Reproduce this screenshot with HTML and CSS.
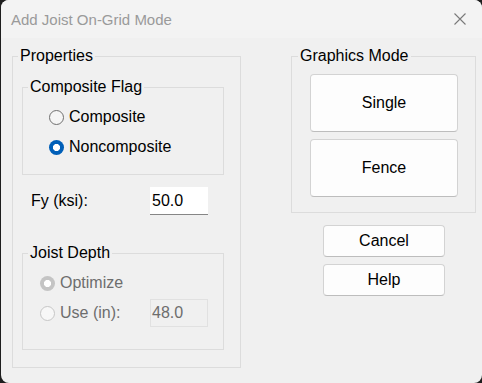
FILE: index.html
```html
<!DOCTYPE html>
<html lang="en">
<head>
<meta charset="utf-8">
<title>Add Joist On-Grid Mode</title>
<link rel="stylesheet" href="styles.css">
</head>
<body>
<div class="window">
  <div class="titlebar">
    <span class="title">Add Joist On-Grid Mode</span>
    <span class="close" aria-label="Close">
      <svg width="12" height="12" viewBox="0 0 12 12"><path d="M0.5 0.5 L11.5 11.5 M11.5 0.5 L0.5 11.5" stroke="#7a7a7a" stroke-width="1.1" fill="none"/></svg>
    </span>
  </div>
  <div class="content">
    <fieldset class="group props">
      <legend>Properties</legend>
      <fieldset class="group sub flag">
        <legend>Composite Flag</legend>
        <div class="radio"><span class="dot"></span>Composite</div>
        <div class="radio"><span class="dot on"></span>Noncomposite</div>
      </fieldset>
      <div class="field-row">
        <span class="field-label">Fy (ksi):</span>
        <span class="textbox">50.0</span>
      </div>
      <fieldset class="group sub depth">
        <legend>Joist Depth</legend>
        <div class="radio disabled"><span class="dot on"></span>Optimize</div>
        <div class="radio-row">
          <div class="radio disabled use"><span class="dot"></span>Use (in):</div>
          <span class="textbox disabled">48.0</span>
        </div>
      </fieldset>
    </fieldset>
    <div class="right">
      <fieldset class="group graphics">
        <legend>Graphics Mode</legend>
        <button class="btn big">Single</button>
        <button class="btn big">Fence</button>
      </fieldset>
      <div class="actions">
        <button class="btn small">Cancel</button>
        <button class="btn small">Help</button>
      </div>
    </div>
  </div>
</div>
</body>
</html>
```
FILE: styles.css
```css
html, body {
  margin: 0;
  padding: 0;
  background: #1e1e1e;
}
body {
  width: 482px;
  height: 383px;
  overflow: hidden;
  font-family: "Liberation Sans", Arial, sans-serif;
  font-size: 16px;
  color: #000;
}
.window {
  margin-left: 1px;
  width: 481px;
  height: 383px;
  background: #f0f0f0;
  border-radius: 8px;
  overflow: hidden;
}
.titlebar {
  height: 38px;
  background: #f3f3f3;
  display: flex;
  align-items: center;
  padding-left: 10px;
  box-sizing: border-box;
}
.title {
  font-size: 15px;
  line-height: 18px;
  color: #9a9a9a;
  margin-top: 1px;
}
.close {
  margin-left: auto;
  margin-right: 16px;
  width: 12px;
  height: 12px;
  display: flex;
}
.content {
  display: flex;
  align-items: flex-start;
  gap: 50px;
  padding: 9px 0 0 11px;
}
.group {
  margin: 0;
  padding: 0;
  border: 1px solid #dcdcdc;
  box-sizing: border-box;
  min-width: 0;
}
.group > legend {
  margin-left: 5px;
  padding: 0 2px;
  font-size: 16px;
  line-height: 18px;
}
.props {
  width: 229px;
  padding: 13px 0 17px 0;
}
.props > .sub,
.props > .field-row {
  margin-left: 9px;
}
.sub {
  width: 202px;
}
.flag {
  padding: 6px 0 12px 0;
}
.flag > .radio {
  margin-left: 26px;
}
.depth {
  margin-top: 29px;
  padding: 6px 0 21px 0;
}
.depth > .radio,
.depth > .radio-row {
  margin-left: 17px;
}
.radio {
  display: flex;
  align-items: center;
  height: 30px;
  gap: 5px;
  line-height: 18px;
}
.dot {
  width: 15px;
  height: 15px;
  box-sizing: border-box;
  border-radius: 50%;
  border: 1px solid #6f6f6f;
  background: #f5f5f5;
  flex: none;
}
.dot.on {
  border: none;
  background: radial-gradient(circle, #ffffff 0 3.2px, #005fb8 3.9px);
}
.disabled {
  color: #6d6d6d;
}
.disabled .dot {
  border-color: #c6c6c6;
  background: #f7f7f7;
}
.disabled .dot.on {
  border: none;
  background: radial-gradient(circle, #ffffff 0 3.2px, #c4c4c4 3.9px);
}
.field-row {
  display: flex;
  align-items: center;
  margin-top: 12px;
  padding-left: 9px;
  height: 28px;
}
.field-label {
  width: 119px;
  line-height: 18px;
}
.textbox {
  width: 58px;
  height: 28px;
  box-sizing: border-box;
  background: #ffffff;
  border-bottom: 1px solid #868686;
  padding: 5px 2px 0;
  line-height: 18px;
}
.textbox.disabled {
  background: #f0f0f0;
  border: 1px solid #e1e1e1;
  padding: 4px 1px 0;
}
.radio-row {
  display: flex;
  align-items: center;
  height: 30px;
}
.use {
  width: 110px;
}
.right {
  display: flex;
  flex-direction: column;
}
.graphics {
  width: 185px;
  padding: 9px 0 15px 0;
  display: flex;
  flex-direction: column;
  align-items: flex-start;
  gap: 7px;
}
.graphics > legend {
  margin-left: 6px;
}
.graphics > .btn {
  margin-left: 18px;
}
.btn {
  font-family: "Liberation Sans", Arial, sans-serif;
  font-size: 16px;
  color: #000;
  background: #fdfdfd;
  border: 1px solid #d3d3d3;
  border-bottom-color: #bdbdbd;
  border-radius: 4px;
  padding: 0;
  margin: 0;
  box-sizing: border-box;
}
.big {
  width: 148px;
  height: 58px;
}
.actions {
  display: flex;
  flex-direction: column;
  gap: 7px;
  margin-top: 12px;
  padding-left: 32px;
}
.small {
  width: 122px;
  height: 32px;
}
```
